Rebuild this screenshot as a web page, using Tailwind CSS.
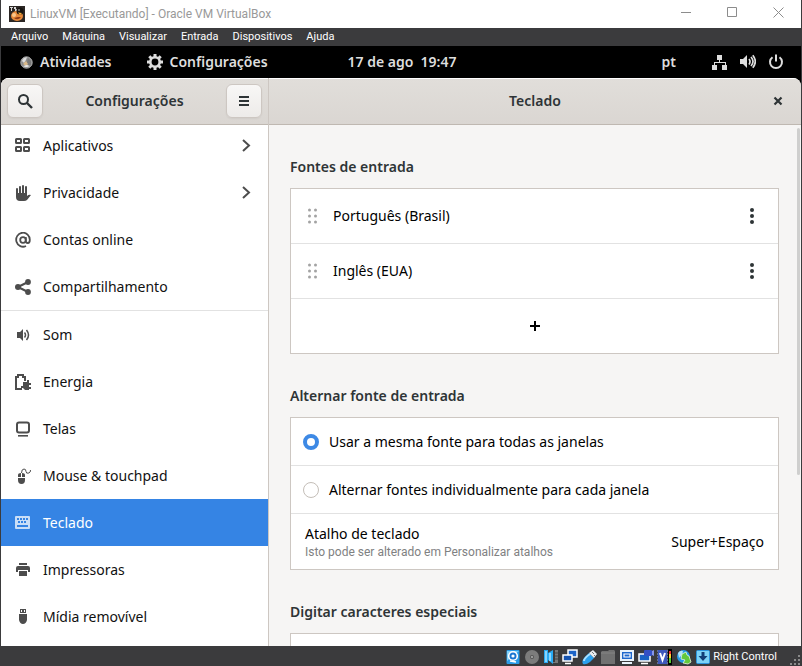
<!DOCTYPE html>
<html lang="pt-BR">
<head>
<meta charset="utf-8">
<title>LinuxVM [Executando] - Oracle VM VirtualBox</title>
<script src="https://cdn.jsdelivr.net/npm/@tailwindcss/browser@4"></script>
</head>
<body class="flex h-screen flex-col overflow-hidden bg-[#3b3b3d] px-px font-['Noto_Sans','Open_Sans',sans-serif] text-sm text-black">

<!-- Host window title bar -->
<header class="flex h-7 shrink-0 items-center bg-white pl-2">
  <svg class="size-4 shrink-0" viewBox="0 0 16 16" aria-hidden="true">
    <rect width="16" height="16" fill="#2b2624"/>
    <path d="M1 1h3v1H3v3H2V2H1zM5 1h2v2h1v2H6V3H5z" fill="#d8d8d8"/>
    <ellipse cx="8" cy="10" rx="6" ry="5" fill="#e8893a"/>
    <ellipse cx="5" cy="9" rx="2" ry="2" fill="#f8c68c"/>
    <circle cx="11" cy="5" r="3.500" fill="#171310"/>
    <path d="M9 6.500l4 0.500-2 2z" fill="#f4b13c"/>
    <circle cx="10" cy="4" r="0.700" fill="#fff"/>
    <path d="M5 12q4 3 7-1l-3 0z" fill="#8e3a16"/>
  </svg>
  <h1 class="ml-[5px] font-['Roboto','Noto_Sans',sans-serif] text-xs text-[#999]">LinuxVM [Executando] - Oracle VM VirtualBox</h1>
  <div class="ml-auto flex h-full text-[#8c8c8c]">
    <button class="flex w-[46px] items-center justify-center pb-[3px]" aria-label="Minimizar"><svg class="size-[11px]" viewBox="0 0 11 11" fill="none" stroke="currentColor"><path d="M0 5.500h10"/></svg></button>
    <button class="flex w-[46px] items-center justify-center pb-[3px]" aria-label="Maximizar"><svg class="size-[11px]" viewBox="0 0 11 11" fill="none" stroke="currentColor"><path d="M0.500 0.500h9v9h-9z"/></svg></button>
    <button class="flex w-[46px] items-center justify-center pb-[3px]" aria-label="Fechar"><svg class="size-[11px]" viewBox="0 0 11 11" fill="none" stroke="currentColor"><path d="M0.500 0.500l10 10M10.500 0.500l-10 10"/></svg></button>
  </div>
</header>

<!-- Host menu bar -->
<nav class="flex h-[18px] shrink-0 items-center gap-[14px] bg-[#3b3b3d] pl-[10px] font-['Roboto','Noto_Sans',sans-serif] text-[11px] text-white" aria-label="Menu">
  <button>Arquivo</button><button>Máquina</button><button>Visualizar</button><button>Entrada</button><button>Dispositivos</button><button>Ajuda</button>
</nav>

<div class="flex min-h-0 flex-1 flex-col bg-black">
  <!-- Guest top bar -->
  <div class="grid h-8 shrink-0 grid-cols-[1fr_auto_1fr] items-center pr-[17px] pl-[19px] font-semibold text-[#dedede]">
    <div class="flex items-center gap-9">
      <button class="flex items-center gap-[7px]">
        <svg class="size-[13px]" viewBox="0 0 13 13" aria-hidden="true"><circle cx="6.500" cy="6.500" r="5.800" fill="#8b8b8b"/><path d="M2 5q1-4 5-4l-1 3-2 3z" fill="#dcdcdc"/><path d="M8 2l3 3v4l-3 2-1-4z" fill="#777"/><path d="M3 8l3-3 2 3-2 2z" fill="#d9b98a"/><path d="M3 10q3 2 7 0l-3-1z" fill="#eee"/><circle cx="6.500" cy="6.500" r="5.700" fill="none" stroke="#aaa"/></svg>
        Atividades
      </button>
      <button class="flex items-center gap-[6px]">
        <svg class="size-4" viewBox="0 0 16 16" fill="none" stroke="currentColor" aria-hidden="true"><circle cx="8" cy="8" r="4.700" stroke-width="2.600"/><path d="M8 0v3M8 13v3M0 8h3M13 8h3M2.300 2.300l2.200 2.200M11.500 11.500l2.200 2.200M13.700 2.300l-2.200 2.200M4.500 11.500l-2.200 2.200" stroke-width="3"/></svg>
        Configurações
      </button>
    </div>
    <button class="whitespace-pre">17 de ago  19:47</button>
    <div class="flex items-center justify-end">
      <button>pt</button>
      <button class="ml-9 flex items-center gap-3" aria-label="Sistema">
        <svg class="size-4" viewBox="0 0 16 16" fill="currentColor"><path d="M5 1h5v5H5zM0 11h5v5H0zM10 11h5v5h-5zM7 6h1v2h6v3h-1V9H3v2H2V8h5z"/></svg>
        <svg class="size-4" viewBox="0 0 16 16" fill="none" stroke="currentColor" stroke-width="1.700"><path d="M0 5h3l4-4v13l-4-4H0z" fill="currentColor" stroke="none"/><path d="M9 5q2 2.500 0 5.500M11 3q4 4.500 0 9M12.800 1.200q5 6.300 0 12.600"/></svg>
        <svg class="size-4" viewBox="0 0 16 16" fill="none" stroke="currentColor" stroke-width="2"><path d="M8 0.500v7M4.500 3.200a6 6 0 1 0 7 0"/></svg>
      </button>
    </div>
  </div>

  <!-- Settings window -->
  <div class="flex min-h-0 flex-1 overflow-hidden rounded-t-lg bg-[#f6f5f4]">
    <aside class="flex w-[268px] shrink-0 flex-col border-r border-[#cdc7c2] bg-white">
      <div class="flex h-[47px] shrink-0 items-center justify-between border-t border-b border-t-white border-b-[#bfb8b1] bg-linear-to-b from-[#e1deda] to-[#dad6d2] px-[6px] pb-px text-[#2e3436]">
        <button class="flex h-[34px] w-9 items-center justify-center rounded-md border border-[#cdc7c2] bg-linear-to-b from-[#f8f7f6] to-[#edebe9] shadow-xs" aria-label="Pesquisar"><svg class="size-4" viewBox="0 0 16 16" fill="none" stroke="currentColor" stroke-width="2"><circle cx="6.500" cy="6.500" r="4.500"/><path d="M10 10l5 5" stroke-width="2.400"/></svg></button>
        <h2 class="font-semibold">Configurações</h2>
        <button class="flex h-[34px] w-9 items-center justify-center rounded-md border border-[#cdc7c2] bg-linear-to-b from-[#f8f7f6] to-[#edebe9] shadow-xs" aria-label="Menu principal"><svg class="size-4" viewBox="0 0 16 16" fill="currentColor"><path d="M3 3h10v2H3zM3 7h10v2H3zM3 11h10v2H3z"/></svg></button>
      </div>
      <nav class="min-h-0 flex-1 overflow-hidden" aria-label="Painéis">
        <ul class="-mt-[3px] text-[#111] [&_a]:flex [&_a]:h-[47px] [&_a]:items-center [&_a]:gap-3 [&_a]:px-[14px] [&_svg]:size-4 [&_svg]:text-[#4d4d4d]">
          <li><a href="#aplicativos"><svg viewBox="0 0 16 16" fill="none" stroke="currentColor" stroke-width="2"><rect x="1" y="1" width="5" height="4" rx=".5"/><rect x="9" y="1" width="5" height="4" rx=".5"/><rect x="1" y="9" width="5" height="4" rx=".5"/><rect x="9" y="9" width="5" height="4" rx=".5"/></svg>Aplicativos<svg class="ml-auto" viewBox="0 0 16 16" fill="none" stroke="currentColor" stroke-width="2"><path d="M5 2l6 5.500-6 5.500"/></svg></a></li>
          <li><a href="#privacidade"><svg viewBox="0 0 16 16" fill="currentColor"><path d="M1 4a1 1 0 0 1 2 0v4h1V2a1 1 0 0 1 2 0v6h1V1a1 1 0 0 1 2 0v7h1V2a1 1 0 0 1 2 0v9q2-2 4-1l-4 5q-1 1-3 1H5q-4 0-4-4z"/></svg>Privacidade<svg class="ml-auto" viewBox="0 0 16 16" fill="none" stroke="currentColor" stroke-width="2"><path d="M5 2l6 5.500-6 5.500"/></svg></a></li>
          <li><a href="#contas"><svg viewBox="0 0 16 16" fill="none" stroke="currentColor" stroke-width="1.800"><circle cx="8" cy="8" r="2.800"/><path d="M10.800 5v4q0 2 2 2t2-3a6.800 7 0 1 0-3.800 6"/></svg>Contas online</a></li>
          <li class="border-b border-[#e2e2e2]"><a href="#compartilhamento"><svg viewBox="0 0 16 16" fill="currentColor"><path d="M3 8l10-5M3 8l10 5" stroke="currentColor" stroke-width="2"/><circle cx="3" cy="8" r="3"/><circle cx="13" cy="3" r="2.900"/><circle cx="13" cy="13" r="2.900"/></svg>Compartilhamento</a></li>
          <li><a href="#som"><svg viewBox="0 0 16 16" fill="none" stroke="currentColor" stroke-width="1.500"><path d="M2 5h3l3-3v12l-3-3H2z" fill="currentColor" stroke="none"/><path d="M9.500 5.500q2 2.500 0 5M11.500 3q4 5 0 10"/></svg>Som</a></li>
          <li><a href="#energia"><svg viewBox="0 0 16 16" fill="currentColor"><path d="M2 0h7v2h2v5H9V4H7V2H4v2H2v10h5v2H0V2h2zM8 8h4V6h2v3h2v2h-2v2h2v2h-2v1h-4l-2-2H6v-2h2z"/></svg>Energia</a></li>
          <li><a href="#telas"><svg viewBox="0 0 16 16" fill="none" stroke="currentColor" stroke-width="2"><rect x="2" y="1.500" width="12" height="10" rx="2"/><path d="M3 14.800h10" stroke-width="1.600"/></svg>Telas</a></li>
          <li><a href="#mouse"><svg viewBox="0 0 16 16" fill="currentColor"><path d="M3 9V7q0-2 3-2v4zM7 5q3 0 3 2v2H7zM3 10h7v2q0 4-3.500 4T3 12z"/><path d="M6.500 5q0-4 2.500-4 2 0 2 2.500T14 5q1.500-.5 1.500-3" fill="none" stroke="currentColor"/></svg>Mouse &amp; touchpad</a></li>
          <li class="bg-[#3584e4] text-white"><a href="#teclado" aria-current="page"><svg viewBox="0 0 16 16"><rect y="1" width="15" height="13" rx="1" fill="#c9def7"/><path d="M2 3h2v2H2zM5 3h2v2H5zM8 3h2v2H8zM11 3h2v2h-2zM3 6h2v2H3zM6 6h2v2H6zM9 6h2v2H9zM2 10h11v2H2z" fill="#3584e4"/></svg>Teclado</a></li>
          <li><a href="#impressoras"><svg viewBox="0 0 16 16" fill="currentColor"><path d="M4 1h8v2H4zM3 4h10q2 0 2 2v4h-2V8H3v2H1V6q0-2 2-2zM4 9h8v5H4z"/></svg>Impressoras</a></li>
          <li><a href="#midia"><svg viewBox="0 0 16 16" fill="currentColor"><path d="M5 0h6v4H5zM4 5h8v6q-1 4-4 4t-4-4z"/><path d="M6 1h1v2H6zM9 1h1v2H9z" fill="#fff"/></svg>Mídia removível</a></li>
        </ul>
      </nav>
    </aside>

    <main class="flex min-w-0 flex-1 flex-col">
      <div class="grid h-[47px] shrink-0 grid-cols-[1fr_auto_1fr] items-center border-t border-b border-t-white border-b-[#bfb8b1] bg-linear-to-b from-[#e1deda] to-[#dad6d2] px-[15px] pb-px text-[#2e3436]">
        <h2 class="col-start-2 font-semibold">Teclado</h2>
        <button class="justify-self-end" aria-label="Fechar janela"><svg class="size-4" viewBox="0 0 16 16" fill="none" stroke="currentColor" stroke-width="2.200"><path d="M4.500 4.500l7 7M11.500 4.500l-7 7"/></svg></button>
      </div>
      <div class="flex min-h-0 flex-1 overflow-hidden">
        <div class="min-w-0 flex-1 pl-[21px]">
          <h3 class="mt-8 mb-[11px] leading-5 font-semibold text-[#2e3436]">Fontes de entrada</h3>
          <ul class="divide-y divide-[#e2e2e2] border border-[#cdc7c2] bg-white">
            <li class="flex h-[55px] items-center px-[14px]">
              <svg class="size-4 text-[#a3a3a3]" viewBox="0 0 16 16" fill="currentColor" aria-hidden="true"><circle cx="4.500" cy="2" r="1.500"/><circle cx="10.500" cy="2" r="1.500"/><circle cx="4.500" cy="8" r="1.500"/><circle cx="10.500" cy="8" r="1.500"/><circle cx="4.500" cy="14" r="1.500"/><circle cx="10.500" cy="14" r="1.500"/></svg>
              <span class="ml-3">Português (Brasil)</span>
              <button class="mr-1 ml-auto text-[#2e3436]" aria-label="Opções de Português (Brasil)"><svg class="size-4" viewBox="0 0 16 16" fill="currentColor"><circle cx="8" cy="2" r="2"/><circle cx="8" cy="8" r="2"/><circle cx="8" cy="14" r="2"/></svg></button>
            </li>
            <li class="flex h-[55px] items-center px-[14px]">
              <svg class="size-4 text-[#a3a3a3]" viewBox="0 0 16 16" fill="currentColor" aria-hidden="true"><circle cx="4.500" cy="2" r="1.500"/><circle cx="10.500" cy="2" r="1.500"/><circle cx="4.500" cy="8" r="1.500"/><circle cx="10.500" cy="8" r="1.500"/><circle cx="4.500" cy="14" r="1.500"/><circle cx="10.500" cy="14" r="1.500"/></svg>
              <span class="ml-3">Inglês (EUA)</span>
              <button class="mr-1 ml-auto text-[#2e3436]" aria-label="Opções de Inglês (EUA)"><svg class="size-4" viewBox="0 0 16 16" fill="currentColor"><circle cx="8" cy="2" r="2"/><circle cx="8" cy="8" r="2"/><circle cx="8" cy="14" r="2"/></svg></button>
            </li>
            <li><button class="flex h-[54px] w-full items-center justify-center" aria-label="Adicionar fonte de entrada"><svg class="size-4" viewBox="0 0 16 16" fill="currentColor"><path d="M7 3h2v4h4v2H9v4H7V9H3V7h4z"/></svg></button></li>
          </ul>

          <h3 class="mt-8 mb-[11px] leading-5 font-semibold text-[#2e3436]">Alternar fonte de entrada</h3>
          <div class="divide-y divide-[#e2e2e2] border border-[#cdc7c2] bg-white">
            <label class="flex h-12 items-center gap-[10px] px-3"><input type="radio" name="fonte" checked class="size-4 appearance-none rounded-full border border-[#c4beb8] bg-white checked:border-[4px] checked:border-[#3d89e5]">Usar a mesma fonte para todas as janelas</label>
            <label class="flex h-12 items-center gap-[10px] px-3"><input type="radio" name="fonte" class="size-4 appearance-none rounded-full border border-[#c4beb8] bg-white checked:border-[4px] checked:border-[#3d89e5]">Alternar fontes individualmente para cada janela</label>
            <div class="flex h-[55px] items-center justify-between px-[14px]">
              <div><p class="leading-5">Atalho de teclado</p><p class="font-['Roboto','Noto_Sans',sans-serif] text-xs text-[#7f8182]">Isto pode ser alterado em Personalizar atalhos</p></div>
              <span>Super+Espaço</span>
            </div>
          </div>

          <h3 class="mt-8 mb-[11px] leading-5 font-semibold text-[#2e3436]">Digitar caracteres especiais</h3>
          <div class="h-14 border border-[#cdc7c2] bg-white"></div>
        </div>
        <div class="flex w-[22px] shrink-0 justify-end pt-[3px] pr-px" aria-hidden="true"><div class="h-[67%] w-[3px] rounded-full bg-[#cfcfce]"></div></div>
      </div>
    </main>
  </div>
</div>

<!-- Host status bar -->
<footer class="flex h-5 shrink-0 items-center justify-end bg-[#3b3b3d] pt-px font-['Roboto','Noto_Sans',sans-serif] text-[11px] text-white">
  <div class="flex gap-[3px] [&_svg]:size-4">
    <svg viewBox="0 0 16 16"><rect x="1.500" y="1" width="13" height="14" rx="1" fill="#2a9be8"/><path d="M2 2h12L2 12z" fill="#7fd0fa"/><circle cx="8" cy="7" r="4.300" fill="#1976d2" stroke="#fff" stroke-width="1.600"/><circle cx="8" cy="7" r="1.600" fill="#fff"/><path d="M5 12l6 1" stroke="#fff" stroke-width="1.500"/></svg>
    <svg viewBox="0 0 16 16"><circle cx="8" cy="8" r="7" fill="#7c7c7c"/><circle cx="8" cy="8" r="2" fill="#555"/><circle cx="8" cy="8" r="0.900" fill="#bbb"/></svg>
    <svg viewBox="0 0 16 16"><path d="M1 1h4v3l5-3v14l-5-4v3H1z" fill="#29aaf4"/><path d="M3 2v11M7 4v8" stroke="#a6e2ff" stroke-width="1.500"/><path d="M12 1h3v13h-5v-1h2z" fill="#777"/><path d="M12 4h3M12 7h3M12 10h3" stroke="#444"/></svg>
    <svg viewBox="0 0 16 16"><path d="M6 1h9v7H6z" fill="#1d64c8" stroke="#fff" stroke-width="1.500"/><path d="M1 6h9v6H1zM3 14.500h6" fill="#1553b0" stroke="#fff" stroke-width="1.500"/></svg>
    <svg viewBox="0 0 16 16"><path d="M2 15q-2-3 2-7l4-4 5 5-4 4q-4 3-7 2z" fill="#2ba0ee"/><path d="M3 12q0-3 6-7" fill="none" stroke="#a9e0ff" stroke-width="2"/><path d="M8 4l4-3 4 4-3 4z" fill="#e9eef2"/><path d="M11 3l2 2M13 6l1 1" stroke="#777"/></svg>
    <svg viewBox="0 0 16 16"><path d="M1 3l1-1h6l1-1h5l1 1v13H1z" fill="#717171"/><path d="M1 4h14" stroke="#858585"/></svg>
    <svg viewBox="0 0 16 16"><path d="M1 1h14v11H1zM3 13h10v2H3z" fill="#e8f2fb"/><path d="M3 3h10v7H3z" fill="#1c67cd"/><path d="M5 5h6v3H5z" fill="#1c67cd" stroke="#fff" stroke-width="1.200"/></svg>
    <svg viewBox="0 0 16 16"><path d="M1 5h11v7H1z" fill="#1a62c4" stroke="#fff" stroke-width="1.500"/><path d="M3 14.500h7" stroke="#fff" stroke-width="1.500"/><rect x="6" y="1" width="8" height="6" rx="1" fill="#3550c4"/><path d="M14 2l2-1v6l-2-1z" fill="#8797ea"/></svg>
    <svg viewBox="0 0 16 16"><path d="M1 1h9v14H1z" fill="#3d58bb"/><path d="M0 2h11M0 5h11M0 8h11M0 11h11M0 14h11" stroke="#8fa2e5" stroke-dasharray="1 9"/><path d="M3 4l2.500 7L8 4" fill="none" stroke="#fff" stroke-width="2"/><path d="M11 0h4v16h-4z" fill="#000"/><path d="M12 2h2v3h-2z" fill="#e33"/><path d="M12 5h2v4h-2z" fill="#fc3"/><path d="M12 9h2v5h-2z" fill="#5c3"/></svg>
    <svg viewBox="0 0 16 16"><circle cx="7.500" cy="7.500" r="6.500" fill="#249be8"/><path d="M2 4q2-3 5-2L6 6 3 9z" fill="#b4e4fa"/><path d="M6 5l4-2 1 3 2 1 2 6-3 2-5-1 2-3-4-1z" fill="#62c93c" stroke="#e6f8df" stroke-width=".8"/></svg>
    <svg viewBox="0 0 16 16"><rect x="1.500" y="1.500" width="13" height="13" rx="1" fill="#7dd2f7" stroke="#2b94de"/><path d="M6.500 3h3v4h3L8 12 3.500 7h3z" fill="#123e78"/></svg>
  </div>
  <span class="ml-[2px] pt-px">Right Control</span>
  <svg class="ml-3 size-3 self-end" viewBox="0 0 12 12" fill="#8a8a8a" aria-hidden="true"><path d="M9 1h2v2H9zM9 5h2v2H9zM9 9h2v2H9zM5 5h2v2H5zM5 9h2v2H5zM1 9h2v2H1z"/></svg>
</footer>
</body>
</html>
